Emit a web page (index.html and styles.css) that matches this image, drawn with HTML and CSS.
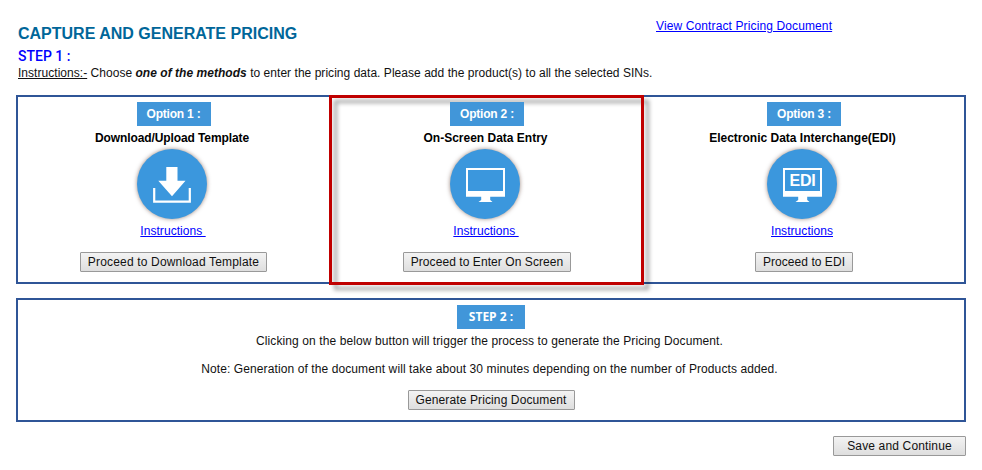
FILE: index.html
```
<!DOCTYPE html>
<html lang="en">
<head>
<meta charset="utf-8">
<title>Capture and Generate Pricing</title>
<link rel="stylesheet" href="styles.css">
</head>
<body>
<header class="header">
  <div class="intro">
    <h1 class="title">CAPTURE AND GENERATE PRICING</h1>
    <h2 class="step">STEP 1 :</h2>
    <p class="lead"><u>Instructions:-</u> Choose <b><i>one of the methods</i></b> to enter the pricing data. Please add the product(s) to all the selected SINs.</p>
  </div>
  <a class="link view-link" href="#">View Contract Pricing Document</a>
</header>

<section class="panel options">
  <div class="option">
    <span class="badge">Option 1 :</span>
    <h3 class="option-title t1">Download/Upload Template</h3>
    <div class="disc"><svg width="70" height="70" viewBox="0 0 70 70"><path fill="#fff" d="M29.300 18h11.200v13.700h8L35 47.300 21.300 31.700h8z"/><path fill="none" stroke="#fff" stroke-width="2.200" d="M17.200 39v13.700h35.600V39"/></svg></div>
    <a class="link" href="#">Instructions&nbsp;</a>
    <button class="btn b1">Proceed to Download Template</button>
  </div>
  <div class="option selected">
    <span class="badge">Option 2 :</span>
    <h3 class="option-title t2">On-Screen Data Entry</h3>
    <div class="disc"><svg width="70" height="70" viewBox="0 0 70 70"><path fill="#fff" fill-rule="evenodd" d="M16 19h39v28.700H16zM18 21v21h35V21z"/><path fill="#fff" d="M31.200 47h9v4l2.300 2h-14l2.700-2z"/></svg></div>
    <a class="link" href="#">Instructions&nbsp;</a>
    <button class="btn b2">Proceed to Enter On Screen</button>
  </div>
  <div class="option third">
    <span class="badge">Option 3 :</span>
    <h3 class="option-title t3">Electronic Data Interchange(EDI)</h3>
    <div class="disc"><svg width="70" height="70" viewBox="0 0 70 70"><path fill="#fff" fill-rule="evenodd" d="M16 19h39v28.700H16zM18 21v21h35V21z"/><path fill="#fff" d="M31.200 47h9v4l2.300 2h-14l2.700-2z"/><text class="edi" x="35.500" y="37" text-anchor="middle">EDI</text></svg></div>
    <a class="link" href="#">Instructions</a>
    <button class="btn b3">Proceed to EDI</button>
  </div>
</section>

<section class="panel generate">
  <span class="badge badge-step">STEP 2 :</span>
  <p class="note n1">Clicking on the below button will trigger the process to generate the Pricing Document.</p>
  <p class="note n2">Note: Generation of the document will take about 30 minutes depending on the number of Products added.</p>
  <button class="btn b4">Generate Pricing Document</button>
</section>

<footer class="footer"><button class="btn b5">Save and Continue</button></footer>
</body>
</html>
```
FILE: styles.css
```
* { box-sizing: border-box; }
body {
  margin: 0;
  padding: 0 16px;
  width: 982px;
  height: 470px;
  background: #fff;
  color: #111;
  font: 12px/14px "Liberation Sans", Arial, sans-serif;
}
h1, h2, h3, p { margin: 0; }
.header { display: flex; height: 95px; padding-left: 2px; white-space: nowrap; }
.intro { width: 638px; padding-top: 24px; }
.title { font-size: 16px; line-height: 19px; color: #069; }
.step { margin-top: 5px; font: 500 14px/16px Roboto, Arial, sans-serif; color: #00f; }
.lead { margin-top: 2px; letter-spacing: .035px; }
.link { color: #00f; text-decoration: underline; }
.view-link { margin-top: 19px; letter-spacing: .12px; }
.panel { border: 2px solid #2f5597; }
.options { display: grid; grid-template-columns: 311px 316px 318px; height: 189px; }
.option { position: relative; display: flex; flex-direction: column; align-items: center; padding-top: 5px; }
.option > * { z-index: 1; }
.option .link { margin-right: 1px; letter-spacing: .05px; }
.selected .link { margin-right: 2px; }
.third .link { margin-right: 4px; }
.selected::before {
  content: "";
  position: absolute;
  inset: -2px 1px -3px 0;
  border: 3px solid #c00000;
  filter: drop-shadow(5px 5px 2px rgba(0, 0, 0, .38));
  pointer-events: none;
}
.badge {
  width: 74px;
  height: 24px;
  background: #4196d9;
  color: #fff;
  font-weight: bold;
  line-height: 24px;
  text-align: center;
  letter-spacing: -.2px;
}
.option-title { margin: 5px 3px 0 0; font-size: 12px; line-height: 14px; color: #000; white-space: nowrap; }
.t1 { letter-spacing: -.1px; }
.disc { width: 70px; height: 70px; margin: 4px 3px 5px 0; border-radius: 50%; background: #3b97dd; box-shadow: 0 0 4px rgba(60, 20, 0, .5); }
.selected .disc, .third .disc { margin-right: 4px; }
.disc svg { display: block; }
.edi { fill: #fff; font-weight: bold; font-size: 16px; letter-spacing: -.3px; }
.btn {
  height: 20px;
  margin: 14px 0 0;
  padding: 0;
  border: 1px solid #999;
  border-radius: 1px;
  background: linear-gradient(#f3f3f3, #dedede);
  color: #111;
  font: 12px/17px "Liberation Sans", Arial, sans-serif;
  white-space: nowrap;
}
.b1 { width: 187px; letter-spacing: .17px; }
.b2 { width: 168px; letter-spacing: .07px; }
.b3 { width: 98px; letter-spacing: .05px; }
.b4 { width: 167px; letter-spacing: .12px; }
.b5 { width: 133px; letter-spacing: .15px; }
.generate { display: flex; flex-direction: column; align-items: center; height: 124px; margin-top: 14px; padding-top: 5px; }
.badge-step { width: 68px; font-family: "Open Sans", Arial, sans-serif; letter-spacing: 0; }
.note { margin-top: 5px; margin-right: 3px; letter-spacing: .1px; }
.n2 { margin-top: 14px; }
.footer { display: flex; justify-content: flex-end; }
```
